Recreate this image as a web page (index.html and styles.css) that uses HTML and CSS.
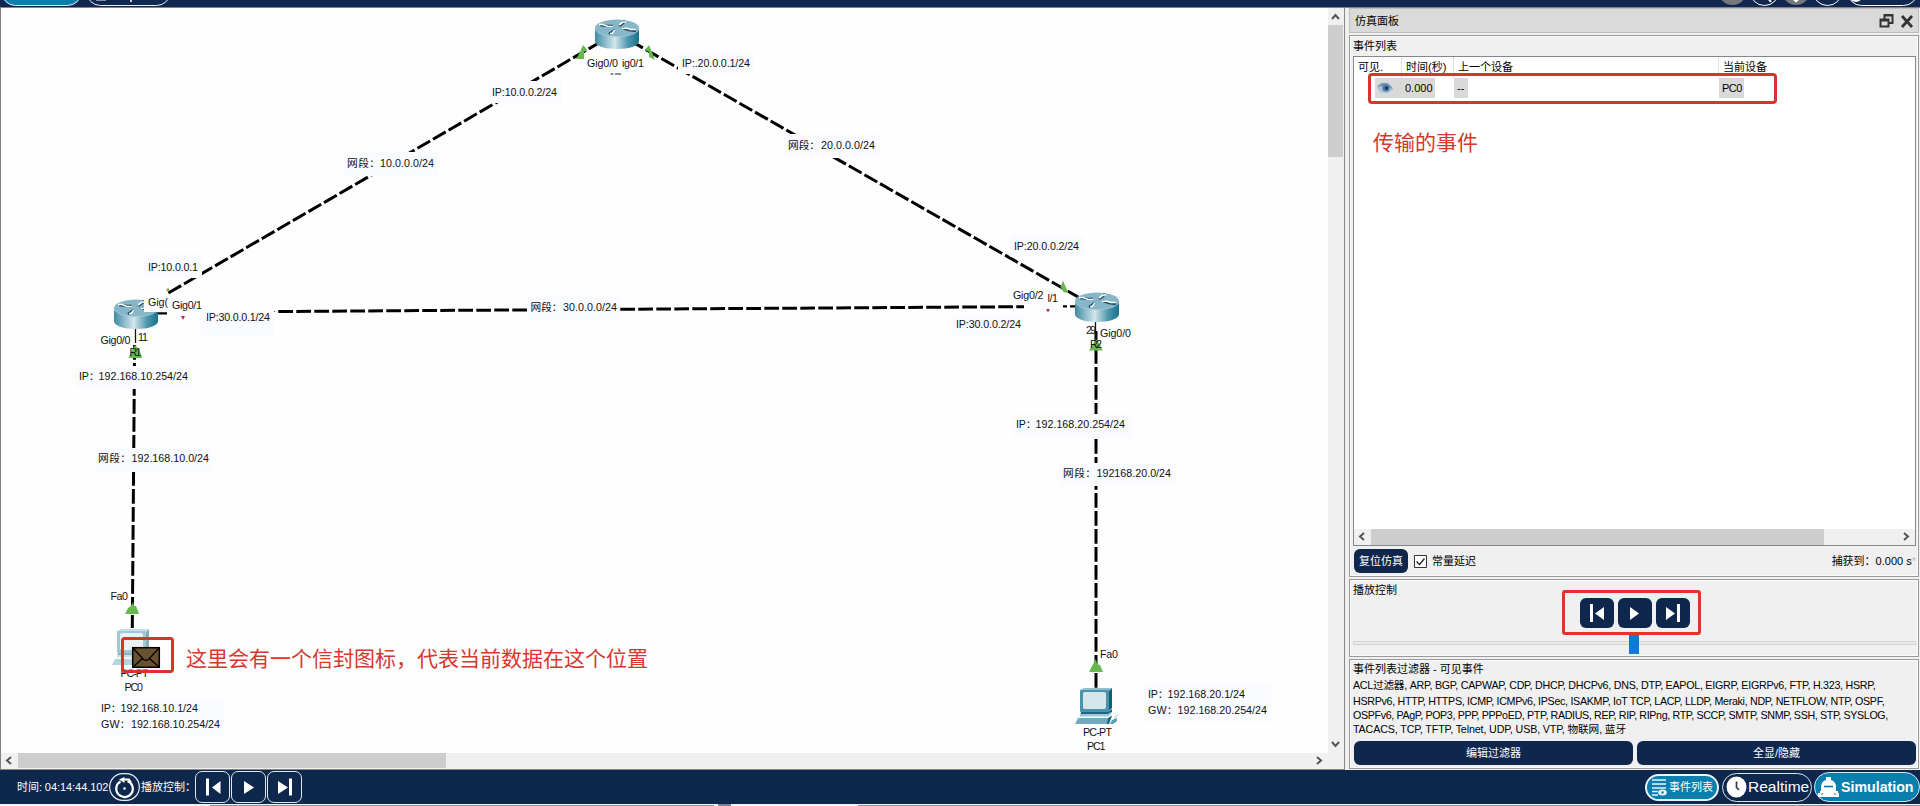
FILE: index.html
```html
<!DOCTYPE html>
<html lang="zh-CN">
<head>
<meta charset="utf-8">
<title>Simulation</title>
<link rel="stylesheet" href="styles.css">
</head>
<body>
<div class="app">
  <header class="topbar">
    <svg width="1920" height="8" viewBox="0 0 1920 8">
      <rect x="1.500" y="-24" width="80" height="29.500" rx="14" fill="#0a7fae" stroke="#e8f2f8"/>
      <rect x="86.500" y="-24" width="84" height="29.500" rx="14" fill="none" stroke="#e8f2f8"/>
      <rect x="96" y="-2" width="10" height="3" fill="#8392a8"/>
      <rect x="130" y="-2" width="2" height="4" fill="#c9d3e0"/>
      <circle cx="1732.500" cy="-9" r="14" fill="#77777b"/>
      <circle cx="1764.500" cy="-9" r="14.500" fill="none" stroke="#fff"/>
      <path d="M1768 -2l3 4" stroke="#fff" stroke-width="2"/>
      <circle cx="1796" cy="-9" r="14" fill="#77777b"/>
      <path d="M1793 0h6l-3 2.500z" fill="#fff"/>
      <circle cx="1827.500" cy="-9" r="14.500" fill="none" stroke="#fff"/>
      <rect x="1847.500" y="-24" width="70" height="29.500" rx="14" fill="none" stroke="#fff"/>
      <circle cx="1856" cy="-4" r="6" fill="#fff"/>
    </svg>
  </header>

  <main class="main">
    <section class="workspace">
      <svg class="canvas" width="1327" height="745" viewBox="1 8 1327 745">
        <defs>
          <linearGradient id="body" x1="0" x2="1" y1="0" y2="0">
            <stop offset="0" stop-color="#3f8aa3"/>
            <stop offset=".1" stop-color="#5f9fb5"/>
            <stop offset=".45" stop-color="#d3e5ec"/>
            <stop offset=".75" stop-color="#4d97ae"/>
            <stop offset="1" stop-color="#18718c"/>
          </linearGradient>
          <symbol id="router" viewBox="0 0 44 30" overflow="visible">
            <path d="M0 9v13c0 4.500 9 8 22 8s22-3.500 22-8V9z" fill="url(#body)"/>
            <ellipse cx="22" cy="9" rx="22" ry="8.500" fill="#87b6c8"/>
            <path d="M0 9c0 5 9 8.500 22 8.500S44 14 44 9" fill="none" stroke="#a9ccd8" stroke-width=".8"/>
            <path d="M5 6l8 1 5 0M24 7l3-2 3-3M14 15l3-2 3-2M41 12l-7-1-6-2" fill="none" stroke="#1c4d66" stroke-width="2.600"/>
            <path d="M4 5.500h4l5 2h5M24 6l4-3h3M15 14.500h2l3-3.500M41 10.500h-5l-5-1.500-4 .5" fill="none" stroke="#fff" stroke-width="1.700"/>
          </symbol>
          <symbol id="pc" viewBox="0 0 44 36" overflow="visible">
            <path d="M5 2l4-2h28l-3 3z" fill="#8fc0d0"/>
            <path d="M34 3l3-3v20l-4 4z" fill="#126078"/>
            <rect x="5" y="2" width="29" height="22" rx="1" fill="#4a93ab"/>
            <rect x="8" y="4" width="23" height="17" rx="2" fill="#d6e7ec"/>
            <path d="M6 24h27l4-3v3l-4 4H5z" fill="#126b86"/>
            <path d="M5 26h28l3-2v2l-3 2.500H5z" fill="#9cc7d5"/>
            <path d="M3 30h30l4-3-4 9H0z" fill="#6faabe"/>
            <path d="M33 30l4-2-3 8h-2z" fill="#126b86"/>
            <path d="M37 32l5-2v3l-4 3h-3z" fill="#5a9db3"/>
            <path d="M39 30l3-2 1-2" fill="none" stroke="#7aa" stroke-width=".6"/>
          </symbol>
        </defs>

        <g class="link">
          <path d="M168.400 293L597 44"/>
          <path d="M630.100 40.600L1079 297.500"/>
          <path d="M278.300 311.500L1024 306.700"/>
          <path d="M134.600 345L132.300 628"/>
          <path d="M1096 331V688"/>
        </g>
        <path d="M158 313.300h9M1063 306.300h4M1070 306.300h6" stroke="#000" stroke-width="2.200"/>
        <path d="M1095.500 322v22M135.500 329v14" stroke="#111" stroke-width="1.300"/>
        <path d="M274 311.500h1" stroke="#555"/>

        <g class="up">
          <path d="M583 45l4.500 5-3.500 2v7h-8l4-7z"/>
          <path d="M649 45l3 7 3 8-6-3 0-5-4-2z"/>
          <path d="M1063 280.500l2.500 6 3 6.500-5-1-3-5z"/>
          <path d="M135 345l4.500 5 2.500 8h-13.500l3-7z"/>
          <path d="M1096 339l4 5 2.500 6.500h-13.500z"/>
          <path d="M133 602l1 4 2 0 3 8h-14l3-6 3-2z"/>
          <path d="M1096 659l1 5 3 1 3 7h-14l3-6z"/>
        </g>
        <path d="M166 291l2-3.500 2 3.500z" fill="#8aa53c"/>
        <path d="M181 316h4l-2 4zM1046 309h4l-2 3.500z" fill="#b8304f"/>

        <use href="#router" x="595" y="19" width="44" height="30"/>
        <use href="#router" x="114" y="299" width="44" height="30"/>
        <use href="#router" x="1075" y="292" width="44" height="30"/>
        <use href="#pc" x="1075" y="688" width="44" height="36"/>
        <g opacity=".5"><use href="#pc" x="112" y="629" width="44" height="36"/></g>

        <g fill="#fff">
          <rect x="144" y="293" width="24" height="19"/>
          <rect x="168" y="297" width="35" height="18"/>
          <rect x="586" y="57" width="61" height="14"/>
          <rect x="1010" y="288" width="34" height="17"/>
          <rect x="1024" y="305" width="39" height="3"/>
          <rect x="1045" y="292" width="16" height="14"/>
        </g>
        <g class="note">
          <rect x="144" y="254" width="58" height="24"/>
          <rect x="201" y="313" width="73" height="23"/>
          <rect x="76" y="366" width="115" height="23"/>
          <rect x="95" y="448" width="116" height="24"/>
          <rect x="97" y="698" width="127" height="38"/>
          <rect x="488" y="81" width="74" height="22"/>
          <rect x="678" y="52" width="76" height="22"/>
          <rect x="784" y="134" width="96" height="24"/>
          <rect x="344" y="152" width="94" height="24"/>
          <rect x="527" y="297" width="93" height="23"/>
          <rect x="1010" y="235" width="74" height="22"/>
          <rect x="952" y="315" width="73" height="22"/>
          <rect x="1013" y="414" width="120" height="24"/>
          <rect x="1060" y="463" width="117" height="23"/>
          <rect x="1144" y="684" width="127" height="38"/>
        </g>

        <g class="label">
          <text x="148" y="271" textLength="50">IP:10.0.0.1</text>
          <text x="148" y="306" textLength="20">Gig(</text>
          <text x="172" y="309" textLength="30">Gig0/1</text>
          <text x="206" y="321" textLength="64">IP:30.0.0.1/24</text>
          <text x="100.500" y="344" textLength="30">Gig0/0</text>
          <text x="138" y="341" textLength="10">11</text>
          <text x="129.500" y="355.500" textLength="12">R1</text>
          <text x="79" y="380" textLength="20.500">IP：</text><text x="98.500" y="380" textLength="89.500">192.168.10.254/24</text>
          <text x="98" y="462" textLength="33">网段：</text><text x="131.500" y="462" textLength="77.500">192.168.10.0/24</text>
          <text x="110.500" y="600" textLength="17.500">Fa0</text>
          <text x="120.500" y="676.500" textLength="28">PC-PT</text>
          <text x="124.500" y="691" textLength="18.500">PC0</text>
          <text x="101" y="712" textLength="20.500">IP：</text><text x="120.500" y="712" textLength="77.500">192.168.10.1/24</text>
          <text x="101" y="728" textLength="29.500">GW：</text><text x="131" y="728" textLength="89">192.168.10.254/24</text>
          <text x="587" y="67" textLength="31">Gig0/0</text>
          <text x="622" y="67" textLength="22">ig0/1</text>
          <text x="682" y="67" textLength="68">IP:.20.0.0.1/24</text>
          <text x="492" y="96" textLength="65">IP:10.0.0.2/24</text>
          <text x="788" y="149" textLength="32">网段：</text><text x="821" y="149" textLength="54">20.0.0.0/24</text>
          <text x="347" y="167" textLength="33">网段：</text><text x="380" y="167" textLength="54">10.0.0.0/24</text>
          <text x="530.500" y="311" textLength="32">网段：</text><text x="563" y="311" textLength="54">30.0.0.0/24</text>
          <text x="1014" y="250" textLength="65">IP:20.0.0.2/24</text>
          <text x="1013" y="299" textLength="30.500">Gig0/2</text>
          <text x="1047.500" y="301.500" textLength="10.500">l/1</text>
          <text x="956" y="328" textLength="65">IP:30.0.0.2/24</text>
          <text x="1086" y="334" textLength="10">29</text>
          <text x="1100" y="337" textLength="31">Gig0/0</text>
          <text x="1090" y="348" textLength="12">R2</text>
          <text x="1016" y="428" textLength="20.500">IP：</text><text x="1035.500" y="428" textLength="89.500">192.168.20.254/24</text>
          <text x="1063" y="477" textLength="33">网段：</text><text x="1096.500" y="477" textLength="74.500">192168.20.0/24</text>
          <text x="1100" y="658" textLength="18">Fa0</text>
          <text x="1083" y="736" textLength="29">PC-PT</text>
          <text x="1087" y="750" textLength="18.500">PC1</text>
          <text x="1148" y="698" textLength="20.500">IP：</text><text x="1167.500" y="698" textLength="77.500">192.168.20.1/24</text>
          <text x="1148" y="714" textLength="29.500">GW：</text><text x="1177.500" y="714" textLength="89.500">192.168.20.254/24</text>
        </g>
        <path d="M610.500 74h3M615 74h6" stroke="#222" stroke-width="1"/>
        <rect x="204" y="312" width="3" height="5" fill="#fafbff"/>

        <rect x="122" y="668" width="28" height="1.500" fill="#fff"/>
        <g stroke="#000" fill="none">
          <rect x="132.700" y="647.700" width="26.600" height="19.600" fill="#6a5130" stroke-width="1.500"/>
          <path d="M133 648l10.500 11.500q2.500 1.500 5 0L159 648M133 667l9.500-8.500M159 667l-9.500-8.500" stroke-width="1.300"/>
        </g>
        <rect x="122.500" y="638.500" width="50" height="33" rx="2" fill="none" stroke="#d9342b" stroke-width="3"/>
        <text class="callout" x="186" y="665.500" textLength="462">这里会有一个信封图标，代表当前数据在这个位置</text>
      </svg>

      <div class="vscroll">
        <svg width="15" height="17" viewBox="0 0 15 17"><path d="M4 11l3.500-4 3.500 4" class="chev"/></svg>
        <div class="vthumb"></div>
        <svg class="push" width="15" height="17" viewBox="0 0 15 17"><path d="M4 6l3.500 4 3.500-4" class="chev"/></svg>
      </div>
      <div class="hscroll">
        <svg width="17" height="15" viewBox="0 0 17 15"><path d="M10 4L6 7.500l4 3.500" class="chev"/></svg>
        <div class="hthumb"></div>
        <svg class="push" width="17" height="15" viewBox="0 0 17 15"><path d="M6 4l4 3.500L6 11" class="chev"/></svg>
      </div>
    </section>

    <aside class="panel">
      <div class="panel-title">
        <span>仿真面板</span>
        <svg width="36" height="18" viewBox="0 0 36 18">
          <path d="M5.500 7V3h8v8h-4M5 3.500h9M1.500 7.500h8v7h-8zM1 8.500h9" fill="none" stroke="#333" stroke-width="2"/>
          <path d="M23 4l10 11M33 4L23 15" stroke="#333" stroke-width="2.800"/>
        </svg>
      </div>

      <section class="group events">
        <h2>事件列表</h2>
        <div class="table">
          <div class="thead">
            <span>可见.</span><span>时间(秒)</span><span>上一个设备</span><span>当前设备</span>
          </div>
          <div class="trow">
            <div class="cell eye">
              <svg width="18" height="14" viewBox="0 0 18 14">
                <path d="M1 7Q4 1 10 1.500 15 2 17 8 13 13 8 12 4 12 1 7z" fill="#a9c3d8"/>
                <path d="M1 6Q6 0 12 3q3 2 5 6-4-4-8-4T1 6z" fill="#6f91b0"/>
                <circle cx="10" cy="7" r="3.600" fill="#4a76a0"/><circle cx="10.500" cy="7" r="1.600" fill="#142f4c"/>
              </svg>
              <span>0.000</span>
            </div>
            <div class="cell prev">--</div>
            <div class="cell cur">PC0</div>
            <div class="mark row-mark"></div>
          </div>
          <p class="callout-html">传输的事件</p>
          <div class="tscroll">
            <svg width="17" height="15" viewBox="0 0 17 15"><path d="M10 4L6 7.500l4 3.500" class="chev"/></svg>
            <div class="tthumb"></div>
            <svg class="push" width="17" height="15" viewBox="0 0 17 15"><path d="M6 4l4 3.500L6 11" class="chev"/></svg>
          </div>
        </div>
        <div class="reset-row">
          <button class="navy reset">复位仿真</button>
          <svg width="13" height="13" viewBox="0 0 13 13"><path d="M.5.500h12v12H.5z" fill="#fff" stroke="#333"/><path d="M2.500 6.500l3 3 5-6" fill="none" stroke="#222" stroke-width="1.300"/></svg>
          <span class="delay">常量延迟</span>
          <span class="captured">捕获到：0.000 s<i>*</i></span>
        </div>
      </section>

      <section class="group playback">
        <h2>播放控制</h2>
        <div class="play-box">
          <button class="navy"><svg width="18" height="20" viewBox="0 0 18 20"><path d="M2 1h3v18H2zM16 4v13L7 10.500z" fill="#fff"/></svg></button>
          <button class="navy"><svg width="18" height="20" viewBox="0 0 18 20"><path d="M4 4v13l9-6.500z" fill="#fff"/></svg></button>
          <button class="navy"><svg width="18" height="20" viewBox="0 0 18 20"><path d="M13 1h3v18h-3zM2 4v13l9-6.500z" fill="#fff"/></svg></button>
        </div>
        <div class="track"><div class="handle"></div></div>
      </section>

      <section class="group filters">
        <h2>事件列表过滤器 - 可见事件</h2>
        <div class="protocols">
          <div class="p1">ACL过滤器, ARP, BGP, CAPWAP, CDP, DHCP, DHCPv6, DNS, DTP, EAPOL, EIGRP, EIGRPv6, FTP, H.323, HSRP,</div>
          <div class="p2">HSRPv6, HTTP, HTTPS, ICMP, ICMPv6, IPSec, ISAKMP, IoT TCP, LACP, LLDP, Meraki, NDP, NETFLOW, NTP, OSPF,</div>
          <div class="p3">OSPFv6, PAgP, POP3, PPP, PPPoED, PTP, RADIUS, REP, RIP, RIPng, RTP, SCCP, SMTP, SNMP, SSH, STP, SYSLOG,</div>
          <div class="p4">TACACS, TCP, TFTP, Telnet, UDP, USB, VTP, 物联网, 蓝牙</div>
        </div>
        <div class="filter-buttons">
          <button class="navy">编辑过滤器</button>
          <button class="navy">全显/隐藏</button>
        </div>
      </section>
    </aside>
  </main>

  <footer class="bottombar">
    <span class="time">时间: 04:14:44.102</span>
    <svg class="cycle" width="31" height="28" viewBox="0 0 31 28">
      <rect x=".7" y=".7" width="29.600" height="26.600" rx="13" fill="none" stroke="#e6eef6" stroke-width="1.200"/>
      <path d="M11.500 8.500A8.300 8.300 0 1 0 18.500 8" fill="none" stroke="#fff" stroke-width="2.200"/>
      <path d="M10 6.500l5.500-2.500v6z" fill="#fff"/><path d="M15 6.500h5l2 3" fill="none" stroke="#fff" stroke-width="1.800"/>
      <circle cx="15.500" cy="15.500" r="1.200" fill="#fff"/>
    </svg>
    <span class="ctl">播放控制：</span>
    <div class="transport">
      <button><svg width="18" height="20" viewBox="0 0 18 20"><path d="M2 1.500h3v17H2zM16.500 4v13L8 10.500z" fill="#fff"/></svg></button>
      <button><svg width="18" height="20" viewBox="0 0 18 20"><path d="M4 4v13l10-6.500z" fill="#fff"/></svg></button>
      <button><svg width="18" height="20" viewBox="0 0 18 20"><path d="M13 1.500h3v17h-3zM2 4v13l10-6.500z" fill="#fff"/></svg></button>
    </div>
    <div class="modes">
      <div class="pill list">
        <svg width="16" height="18" viewBox="0 0 16 18"><path d="M1 2h14M1 6h14M1 10h14M1 13.500h6M1 17h6" stroke="#e8f6fc" stroke-width="1.700"/><ellipse cx="11.500" cy="14.500" rx="4.300" ry="3" fill="#e8f6fc"/><circle cx="11.500" cy="14.500" r="1.200" fill="#0a7fae"/></svg>
        <span>事件列表</span>
      </div>
      <div class="pill real">
        <svg width="21" height="22" viewBox="0 0 21 22"><ellipse cx="10.500" cy="11" rx="10" ry="10.500" fill="#fff"/><path d="M10.500 5.500v6l2.500 2.500" fill="none" stroke="#2b3c55" stroke-width="1.700"/></svg>
        <span>Realtime</span>
      </div>
      <div class="pill sim">
        <svg width="21" height="20" viewBox="0 0 21 20"><path d="M3 9q1-5 5-6V0h5v3q4 1 5 6v5h2v2h1v4H0v-4h2v-2h1z" fill="#fff"/><path d="M6 9.500h9" stroke="#0a7fae" stroke-width="1.700"/><path d="M4 18v-2M17 18v-2" stroke="#0a7fae"/></svg>
        <span>Simulation</span>
      </div>
    </div>
  </footer>
  <div class="edge">
    <svg width="1920" height="2" viewBox="0 0 1920 2"><path d="M210 1.500h504M858 1.500h1062" stroke="#8a8f99"/><path d="M718 1h13" stroke="#7b8190" stroke-width="2"/></svg>
  </div>
</div>
</body>
</html>
```
FILE: styles.css
```css
* { box-sizing: border-box; }
body {
  margin: 0;
  background: #f0f0f0;
  font: 11px/14px "Liberation Sans", "Noto Sans CJK SC", sans-serif;
  color: #000;
}
svg { display: block; flex: none; }
button { font: inherit; margin: 0; padding: 0; border: 0; display: flex; align-items: center; justify-content: center; }
h2 { margin: 0; font: inherit; white-space: nowrap; }
.app { width: 1920px; height: 806px; overflow: hidden; display: grid; grid-template-rows: 8px 762px 34px 2px; }
.topbar { background: #10284f; border-bottom: 1px solid #7d8597; overflow: hidden; }
.main { display: grid; grid-template-columns: 1345px 575px; min-height: 0; }

.workspace {
  display: grid;
  grid-template-columns: 1327px 16px;
  grid-template-rows: 745px 16px;
  border-left: 1px solid #808080;
  border-right: 1px solid #85878c;
  border-bottom: 1px solid #85878c;
}
.canvas { background: #fefefe; }
.link path { stroke: #000; stroke-width: 3; stroke-dasharray: 14.7 3.3; }
.up { fill: #67b84f; }
.note { fill: #fafbff; }
.label { font: 10.700px "Liberation Sans", "Noto Sans CJK SC", sans-serif; fill: #111; }
.callout { font: 400 21px "Noto Sans CJK SC", sans-serif; fill: #d6382e; }
.chev { fill: none; stroke: #555; stroke-width: 2; }
.vscroll { display: flex; flex-direction: column; background: #f0f0f0; width: 15px; }
.vthumb { width: 15px; height: 132px; background: #cdcdcd; }
.push { margin-top: auto; }
.hscroll { display: flex; background: #f0f0f0; grid-column: 1 / 3; padding-right: 16px; }
.hthumb { width: 428px; height: 15px; background: #cdcdcd; }
.hscroll .push, .tscroll .push { margin-top: 0; margin-left: auto; }

.panel { padding-left: 4px; display: flex; flex-direction: column; gap: 2px; }
.panel-title {
  height: 25px; margin-right: 1px; padding: 0 3px 0 5px;
  background: #dadada; border: 1px solid #bdbdbd;
  display: flex; align-items: center; justify-content: space-between;
}
.group { margin-right: 1px; border: 1px solid #9b9b9f; box-shadow: inset 0 0 0 1px #fafafa; padding: 3px 2px 0 3px; }
.events { height: 542px; }
.playback { height: 78px; }
.filters { height: 110px; padding-top: 2px; }
.events h2 { height: 17px; line-height: 15px; }
.table { height: 490px; background: #fff; border: 1px solid #828790; display: flex; flex-direction: column; width: 563px; }
.thead { height: 17px; line-height: 21px; display: grid; grid-template-columns: 48px 52px 265px 1fr; white-space: nowrap; }
.thead span { padding-left: 4px; border-right: 1px solid #e2e2e2; }
.thead span:last-child { border: 0; }
.trow { height: 30px; padding-top: 4px; padding-left: 21px; display: flex; position: relative; }
.cell { height: 20px; line-height: 20px; background: #d9d9d9; }
.eye { width: 60px; display: flex; align-items: center; padding-left: 1px; gap: 11px; }
.prev { width: 14px; margin-left: 19px; padding-left: 3px; }
.cur { width: 25px; margin-left: 251px; padding-left: 3px; white-space: nowrap; letter-spacing: -.5px; }
.mark { position: absolute; border: 3px solid #d9342b; border-radius: 4px; }
.row-mark { left: 14px; top: -1px; width: 409px; height: 31px; }
.callout-html { margin: 22px 0 0 19px; font: 400 21px/30px "Noto Sans CJK SC", sans-serif; color: #d6382e; }
.tscroll { margin-top: auto; height: 16px; display: flex; background: #f0f0f0; }
.tthumb { width: 453px; background: #cdcdcd; }
.reset-row { display: flex; align-items: center; height: 30px; padding-left: 1px; }
.navy { background: #0f274c; color: #fff; border-radius: 6px; }
.reset { width: 54px; height: 24px; margin-right: 6px; }
.delay { margin-left: 5px; }
.captured { margin-left: auto; white-space: nowrap; }
.captured i { font-style: normal; color: #bbb; }

.playback h2 { height: 7px; }
.play-box {
  width: 139px; height: 45px; margin-left: 209px; padding: 0 8px 0 15px;
  border: 3px solid #e0352b; border-radius: 3px; display: flex; gap: 4px; align-items: center;
}
.play-box button { width: 34px; height: 30px; flex: none; }
.track { margin-top: 6px; width: 563px; height: 4px; border: 1px solid #d3d3d3; background: #e9eaea; position: relative; }
.handle { position: absolute; left: 275px; top: -7px; width: 10px; height: 19px; background: #0c7ad6; }

.protocols { padding-top: 2px; white-space: nowrap; font-size: 10.700px; height: 65px; }
.protocols div { height: 14px; }
.protocols .p1 { height: 16px; letter-spacing: -.26px; }
.protocols .p2 { letter-spacing: -.3px; }
.protocols .p3 { letter-spacing: -.36px; }
.protocols .p4 { letter-spacing: -.13px; }
.filter-buttons { display: grid; grid-template-columns: 279px 279px; gap: 4px; padding-left: 1px; }
.filter-buttons button { height: 24px; }

.bottombar { background: #0e274c; color: #fff; display: flex; align-items: center; padding-left: 17px; }
.time { width: 92px; white-space: nowrap; letter-spacing: -.06px; }
.ctl { width: 55px; white-space: nowrap; padding-left: 1px; }
.transport { display: flex; gap: 1px; }
.transport button { width: 35px; height: 32px; background: none; border: 1px solid #dfe7f0; border-radius: 7px; }
.modes { margin-left: auto; display: flex; align-items: center; gap: 2px; }
.pill { display: flex; align-items: center; border: 1px solid #d9e6f0; border-radius: 15px; white-space: nowrap; }
.list { width: 74px; height: 27px; border: 2px solid #e8f4fa; background: #0a7fae; padding-left: 4px; gap: 2px; margin-right: 1px; }
.real { width: 90px; height: 29px; padding-left: 3px; gap: 1px; font-size: 15.500px; }
.sim { width: 106px; height: 30px; padding-left: 3px; gap: 2px; background: #0a7fae; font-size: 14.200px; font-weight: bold; }
.edge { background: #f2f3f5; }
```
